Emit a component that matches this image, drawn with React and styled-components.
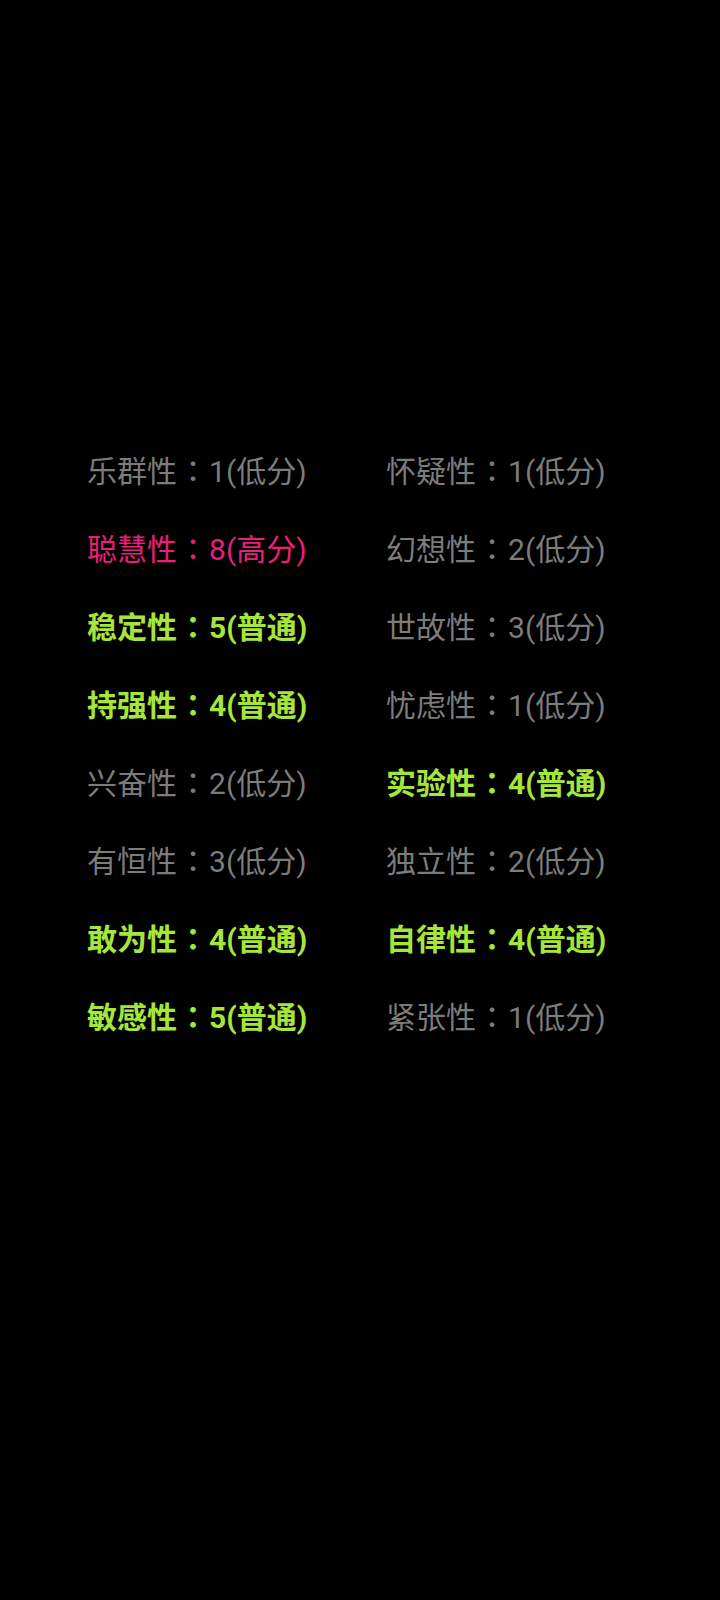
import React from "react";
import styled, { createGlobalStyle } from "styled-components";

const traits = [
  ["乐群性", 1, "low"],
  ["怀疑性", 1, "low"],
  ["聪慧性", 8, "high"],
  ["幻想性", 2, "low"],
  ["稳定性", 5, "mid"],
  ["世故性", 3, "low"],
  ["持强性", 4, "mid"],
  ["忧虑性", 1, "low"],
  ["兴奋性", 2, "low"],
  ["实验性", 4, "mid"],
  ["有恒性", 3, "low"],
  ["独立性", 2, "low"],
  ["敢为性", 4, "mid"],
  ["自律性", 4, "mid"],
  ["敏感性", 5, "mid"],
  ["紧张性", 1, "low"],
];

const labels = { low: "低分", mid: "普通", high: "高分" };

const colors = {
  low: "#7c7c7c",
  mid: "#a6e63a",
  high: "#ea1f7b",
};

const App = () => {
  return (
    <>
      <GlobalStyle />
      <Page>
        <Grid>
          {traits.map(([name, score, level]) => (
            <Item key={name} level={level}>
              {name}
              <Colon>：</Colon>
              {score}({labels[level]})
            </Item>
          ))}
        </Grid>
      </Page>
    </>
  );
};

export default App;

// ------------------ Styled Components ------------------

const GlobalStyle = createGlobalStyle`
  html, body {
    margin: 0;
    padding: 0;
    background: #000;
  }
`;

const Page = styled.div`
  width: 720px;
  height: 1600px;
  background: #000;
  padding-top: 430px;
  box-sizing: border-box;
  font-family: Roboto, "Noto Sans CJK SC", sans-serif;
`;

const Grid = styled.div`
  display: grid;
  grid-template-columns: 299px 1fr;
  padding-left: 87px;
`;

const Item = styled.div`
  height: 78px;
  line-height: 78px;
  font-size: 30px;
  white-space: nowrap;
  color: ${({ level }) => colors[level]};
  font-weight: ${({ level }) => (level === "mid" ? 700 : 400)};
`;

const Colon = styled.span`
  font-family: "Noto Sans CJK TC", sans-serif;
  margin: 0 1px;
`;
